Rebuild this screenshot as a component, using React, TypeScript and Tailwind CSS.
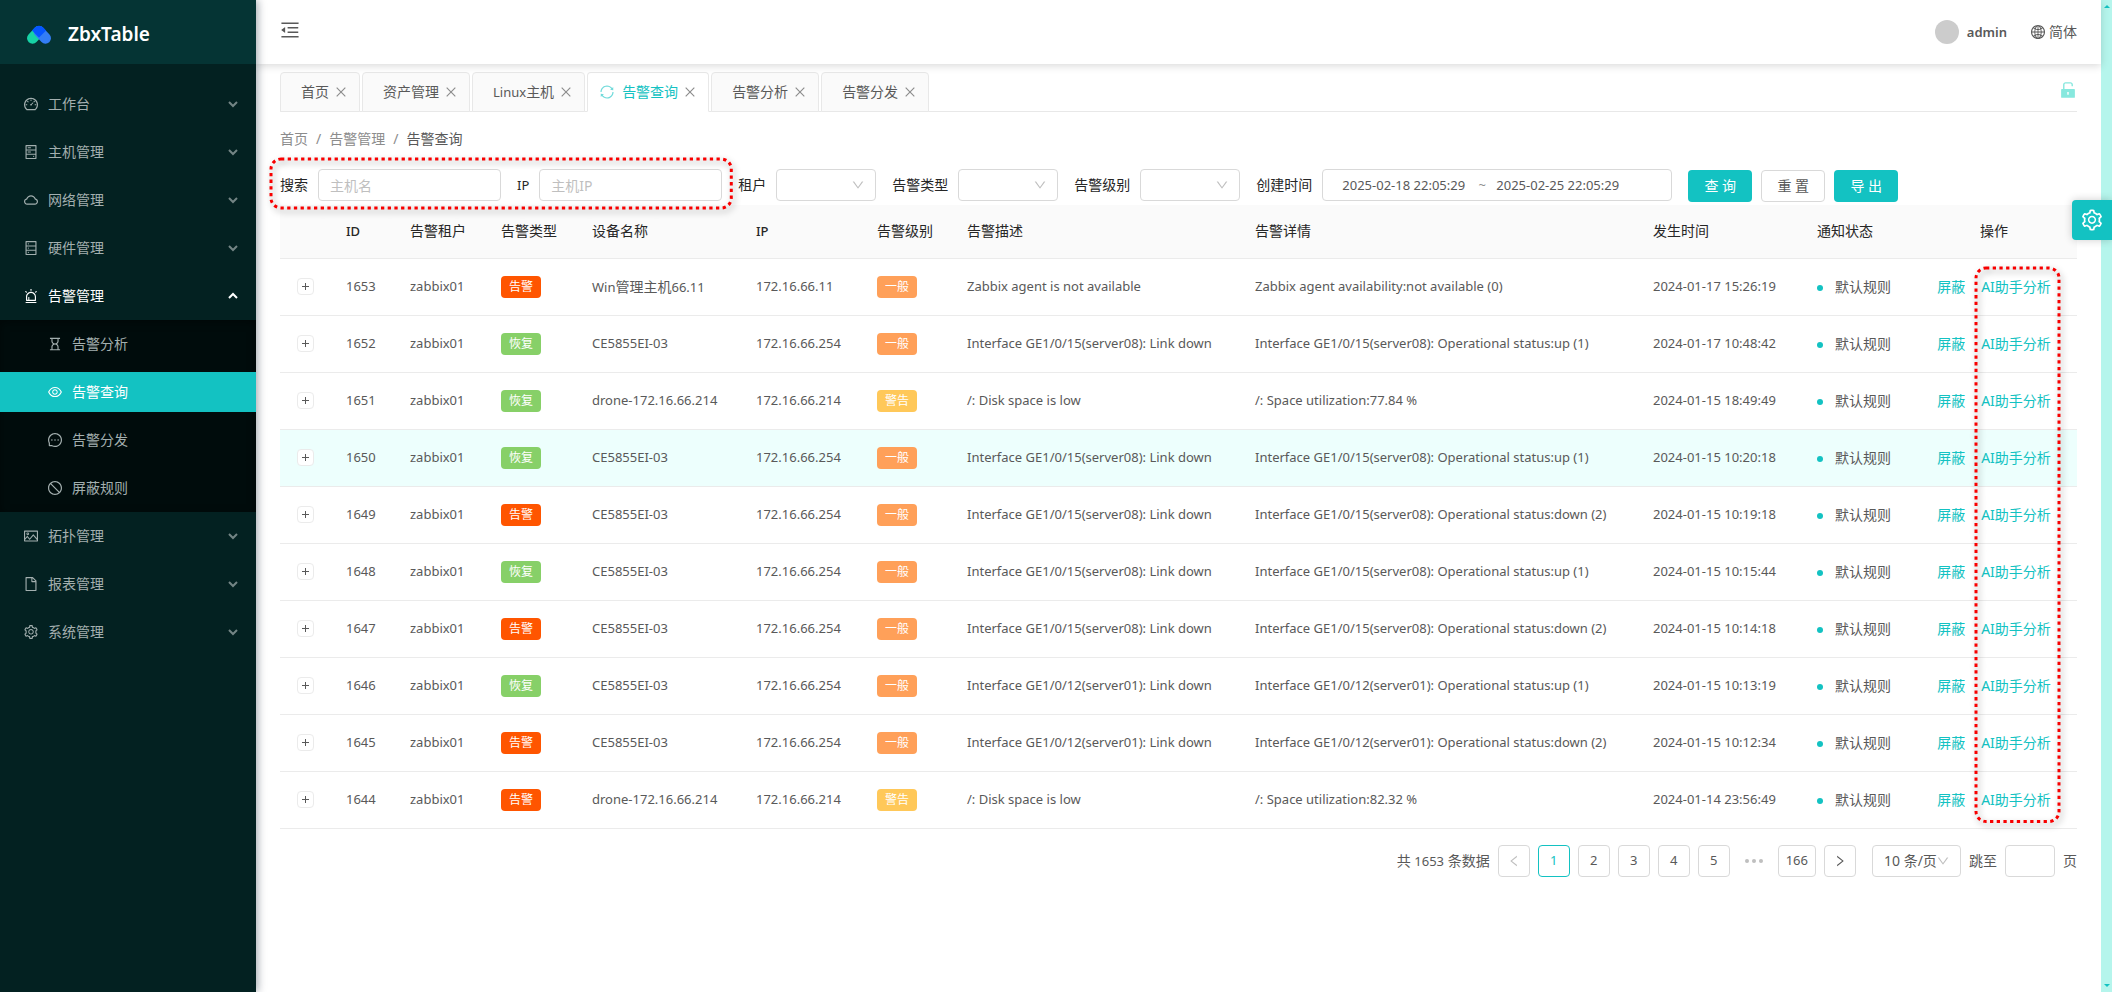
import type { ReactNode } from 'react';
import {
  AiFillUnlock,
  AiOutlineAlert,
  AiOutlineClose,
  AiOutlineCloud,
  AiOutlineDashboard,
  AiOutlineDatabase,
  AiOutlineDown,
  AiOutlineEye,
  AiOutlineFile,
  AiOutlineGlobal,
  AiOutlineHdd,
  AiOutlineHourglass,
  AiOutlineLeft,
  AiOutlineMenuFold,
  AiOutlineMessage,
  AiOutlinePicture,
  AiOutlineRight,
  AiOutlineSetting,
  AiOutlineStop,
  AiOutlineSync,
} from 'react-icons/ai';

interface MenuItem {
  label: string;
  icon: ReactNode;
  open?: boolean;
  children?: { label: string; icon: ReactNode; active?: boolean }[];
}

interface AlarmRow {
  id: number;
  type: '告警' | '恢复';
  device: ReactNode;
  ip: string;
  level: '一般' | '警告';
  desc: string;
  detail: string;
  time: string;
}

const menu: MenuItem[] = [
  { label: '工作台', icon: <AiOutlineDashboard /> },
  { label: '主机管理', icon: <AiOutlineHdd /> },
  { label: '网络管理', icon: <AiOutlineCloud /> },
  { label: '硬件管理', icon: <AiOutlineDatabase /> },
  {
    label: '告警管理',
    icon: <AiOutlineAlert />,
    open: true,
    children: [
      { label: '告警分析', icon: <AiOutlineHourglass /> },
      { label: '告警查询', icon: <AiOutlineEye />, active: true },
      { label: '告警分发', icon: <AiOutlineMessage /> },
      { label: '屏蔽规则', icon: <AiOutlineStop /> },
    ],
  },
  { label: '拓扑管理', icon: <AiOutlinePicture /> },
  { label: '报表管理', icon: <AiOutlineFile /> },
  { label: '系统管理', icon: <AiOutlineSetting /> },
];

const tabs: { key: string; title: ReactNode }[] = [
  { key: '首页', title: '首页' },
  { key: '资产管理', title: '资产管理' },
  { key: 'Linux主机', title: <><span className="text-[13px]">Linux</span>主机</> },
  { key: '告警查询', title: '告警查询' },
  { key: '告警分析', title: '告警分析' },
  { key: '告警分发', title: '告警分发' },
];
const activeTab = '告警查询';

const rows: AlarmRow[] = [
  { id: 1653, type: '告警', device: <>Win<span className="text-sm">管理主机</span>66.11</>, ip: '172.16.66.11', level: '一般', desc: 'Zabbix agent is not available', detail: 'Zabbix agent availability:not available (0)', time: '2024-01-17 15:26:19' },
  { id: 1652, type: '恢复', device: 'CE5855EI-03', ip: '172.16.66.254', level: '一般', desc: 'Interface GE1/0/15(server08): Link down', detail: 'Interface GE1/0/15(server08): Operational status:up (1)', time: '2024-01-17 10:48:42' },
  { id: 1651, type: '恢复', device: 'drone-172.16.66.214', ip: '172.16.66.214', level: '警告', desc: '/: Disk space is low', detail: '/: Space utilization:77.84 %', time: '2024-01-15 18:49:49' },
  { id: 1650, type: '恢复', device: 'CE5855EI-03', ip: '172.16.66.254', level: '一般', desc: 'Interface GE1/0/15(server08): Link down', detail: 'Interface GE1/0/15(server08): Operational status:up (1)', time: '2024-01-15 10:20:18' },
  { id: 1649, type: '告警', device: 'CE5855EI-03', ip: '172.16.66.254', level: '一般', desc: 'Interface GE1/0/15(server08): Link down', detail: 'Interface GE1/0/15(server08): Operational status:down (2)', time: '2024-01-15 10:19:18' },
  { id: 1648, type: '恢复', device: 'CE5855EI-03', ip: '172.16.66.254', level: '一般', desc: 'Interface GE1/0/15(server08): Link down', detail: 'Interface GE1/0/15(server08): Operational status:up (1)', time: '2024-01-15 10:15:44' },
  { id: 1647, type: '告警', device: 'CE5855EI-03', ip: '172.16.66.254', level: '一般', desc: 'Interface GE1/0/15(server08): Link down', detail: 'Interface GE1/0/15(server08): Operational status:down (2)', time: '2024-01-15 10:14:18' },
  { id: 1646, type: '恢复', device: 'CE5855EI-03', ip: '172.16.66.254', level: '一般', desc: 'Interface GE1/0/12(server01): Link down', detail: 'Interface GE1/0/12(server01): Operational status:up (1)', time: '2024-01-15 10:13:19' },
  { id: 1645, type: '告警', device: 'CE5855EI-03', ip: '172.16.66.254', level: '一般', desc: 'Interface GE1/0/12(server01): Link down', detail: 'Interface GE1/0/12(server01): Operational status:down (2)', time: '2024-01-15 10:12:34' },
  { id: 1644, type: '告警', device: 'drone-172.16.66.214', ip: '172.16.66.214', level: '警告', desc: '/: Disk space is low', detail: '/: Space utilization:82.32 %', time: '2024-01-14 23:56:49' },
];

const hoveredId = 1650;

const tagColors = {
  告警: 'bg-[#ff5500]',
  恢复: 'bg-[#87d068]',
  一般: 'bg-[#ffa059]',
  警告: 'bg-[#ffc859]',
};

function Logo() {
  return (
    <svg viewBox="0 0 26 20" className="h-5 w-[26px]" fill="none" aria-hidden="true">
      <g strokeWidth="11" strokeLinecap="round">
        <path d="M6.5 13.2 L12.8 6.5" stroke="#17d3a6" />
        <path d="M13.2 6.5 L19.5 13.2" stroke="#337df5" />
      </g>
      <path d="M13 0.8 C15 0.8 16.4 1.6 17.5 2.8 L20 5.5 L13 12.6 L6 5.5 L8.5 2.8 C9.6 1.6 11 0.8 13 0.8Z" fill="#0556ff" />
    </svg>
  );
}

// Dotted callout drawn over the block it marks
function Callout({ className }: { className: string }) {
  return (
    <div className={`pointer-events-none absolute z-10 ${className}`}>
      <svg className="h-full w-full overflow-visible drop-shadow-[2px_3px_3px_rgba(0,0,0,0.4)]" aria-hidden="true">
        <rect
          x="2"
          y="2"
          rx="10"
          className="h-[calc(100%-4px)] w-[calc(100%-4px)]"
          fill="none"
          stroke="#f80000"
          strokeWidth="3"
          strokeDasharray="3.3 3.4"
        />
      </svg>
    </div>
  );
}

function Tag({ text }: { text: keyof typeof tagColors }) {
  return (
    <span className={`inline-block h-[22px] rounded px-2 align-top text-xs leading-[21px] text-white ${tagColors[text]}`}>
      {text}
    </span>
  );
}

function Sidebar() {
  return (
    <aside className="z-30 w-64 shrink-0 bg-[#032121] text-[#a3afaf] shadow-[2px_0_8px_rgba(0,21,41,0.35)]">
      <div className="flex h-16 items-center gap-4 bg-[#053434] pl-[26px] pt-[6px]">
        <Logo />
        <h1 className="text-[19px] font-semibold text-white">ZbxTable</h1>
      </div>
      <nav className="pt-4">
        <ul>
          {menu.map((item) => (
            <li key={item.label}>
              <button
                className={`flex h-12 w-full items-center pl-[23px] pr-[18px] ${item.open ? 'text-white' : ''}`}
                aria-expanded={!!item.open}
              >
                <span className="mr-[9px] text-base">{item.icon}</span>
                <span>{item.label}</span>
                <svg
                  viewBox="0 0 10 8"
                  className={`ml-auto h-2 w-[10px] ${item.open ? 'rotate-180' : 'opacity-70'}`}
                  aria-hidden="true"
                >
                  <path d="M1 2 L5 6 L9 2" fill="none" stroke="currentColor" strokeWidth="2" />
                </svg>
              </button>
              {item.children && (
                <ul className="bg-[#000c0c] shadow-[inset_0_2px_8px_rgba(0,0,0,0.45)]">
                  {item.children.map((child) => (
                    <li key={child.label} className="py-1">
                      <a
                        href="#"
                        className={`flex h-10 items-center pl-[47px] ${child.active ? 'bg-[#13c2c2] text-white' : ''}`}
                      >
                        <span className="mr-[9px] text-base">{child.icon}</span>
                        {child.label}
                      </a>
                    </li>
                  ))}
                </ul>
              )}
            </li>
          ))}
        </ul>
      </nav>
    </aside>
  );
}

function Header() {
  return (
    <header className="relative z-20 flex h-16 items-center justify-between bg-white px-6 shadow-[0_2px_8px_rgba(0,0,0,0.15)]">
      <button aria-label="折叠菜单" className="-ml-px -mt-1 text-[22px]">
        <AiOutlineMenuFold />
      </button>
      <div className="flex items-center">
        <span className="mr-2 h-6 w-6 rounded-full bg-[#cccccc]" />
        <span className="text-[13px] font-semibold">admin</span>
        <button className="ml-[23px] flex items-center gap-[3px]">
          <AiOutlineGlobal className="text-base" />
          简体
        </button>
      </div>
    </header>
  );
}

function TabBar() {
  return (
    <div className="mt-2 flex h-10 items-end gap-0.5 border-b border-[#e8e8e8]">
      {tabs.map(({ key, title }) => (
        <div
          key={key}
          className={`-mb-px flex h-10 items-center rounded-t border border-[#e8e8e8] pr-[11px] ${
            key === activeTab ? 'border-b-white bg-white pl-[11px] text-[#13c2c2]' : 'bg-[#fafafa] pl-5'
          }`}
        >
          {key === activeTab && <AiOutlineSync className="mr-[7px] text-base opacity-60" />}
          <button>{title}</button>
          <button aria-label={`关闭${key}`} className="ml-[5px] text-sm text-[#8c8c8c]">
            <AiOutlineClose />
          </button>
        </div>
      ))}
      <button aria-label="解锁标签" className="-mr-px mb-[11px] ml-auto text-xl text-[#87e8de]">
        <AiFillUnlock />
      </button>
    </div>
  );
}

function FilterSelect({ id, label }: { id: string; label: string }) {
  return (
    <div className="mr-4 flex items-center gap-[10px]">
      <label htmlFor={id} className="text-[#262626]">{label}</label>
      <div className="relative">
        <select id={id} className="block h-8 w-[100px] appearance-none rounded border border-[#d9d9d9] bg-white" />
        <AiOutlineDown className="pointer-events-none absolute right-[11px] top-[9px] text-sm text-[#bfbfbf]" />
      </div>
    </div>
  );
}

function Filters() {
  const input = 'h-8 w-[183px] rounded border border-[#d9d9d9] px-[11px] placeholder:text-[#bfbfbf]';
  const button = 'mt-px h-8 w-16 rounded text-center';

  return (
    <form className="mb-[3px] mt-5 flex items-start" onSubmit={(e) => e.preventDefault()}>
      <div className="relative mr-4 flex items-center">
        <label htmlFor="host" className="mr-[10px] text-[#262626]">搜索</label>
        <input id="host" placeholder="主机名" className={input} />
        <label htmlFor="ip" className="ml-4 mr-[10px] text-[13px] text-[#262626]">IP</label>
        <input id="ip" placeholder="主机IP" className={input} />
        <Callout className="-inset-x-[11px] -bottom-[9px] -top-3" />
      </div>
      <FilterSelect id="tenant" label="租户" />
      <FilterSelect id="type" label="告警类型" />
      <FilterSelect id="level" label="告警级别" />
      <div className="mr-4 flex items-center gap-[10px]">
        <label htmlFor="start" className="text-[#262626]">创建时间</label>
        <div className="flex h-8 w-[350px] items-center rounded border border-[#d9d9d9] pl-[19px] text-[13px]">
          <input id="start" defaultValue="2025-02-18 22:05:29" className="w-[132px]" />
          <span className="w-4 text-center text-[#8c8c8c]">~</span>
          <input aria-label="结束时间" defaultValue="2025-02-25 22:05:29" className="w-[138px] pl-[6px]" />
        </div>
      </div>
      <div className="flex gap-[9px]">
        <button className={`${button} bg-[#13c2c2] text-white`}>查 询</button>
        <button className={`${button} border border-[#d9d9d9] bg-white`}>重 置</button>
        <button className={`${button} bg-[#13c2c2] text-white`}>导 出</button>
      </div>
    </form>
  );
}

function AlarmTable() {
  return (
    <div className="relative">
      <table className="w-full table-fixed text-left">
        <colgroup>
          <col className="w-[50px]" />
          <col className="w-[64px]" />
          <col className="w-[91px]" />
          <col className="w-[91px]" />
          <col className="w-[164px]" />
          <col className="w-[121px]" />
          <col className="w-[90px]" />
          <col className="w-[288px]" />
          <col />
          <col className="w-[164px]" />
          <col className="w-[110px]" />
          <col className="w-[166px]" />
        </colgroup>
        <thead className="bg-[#fafafa] text-[#262626]">
          <tr className="h-[53px] border-b border-[#ebebeb]">
            <th />
            {['ID', '告警租户', '告警类型', '设备名称', 'IP', '告警级别', '告警描述', '告警详情', '发生时间', '通知状态'].map((title) => (
              <th key={title} className={`px-4 ${title === 'ID' || title === 'IP' ? 'text-[13px] font-medium' : 'font-normal'}`}>
                {title}
              </th>
            ))}
            <th className="px-4 text-center font-normal">操作</th>
          </tr>
        </thead>
        <tbody className="text-[13px]">
          {rows.map((row) => (
            <tr key={row.id} className={`h-[57px] border-b border-[#ebebeb] ${row.id === hoveredId ? 'bg-[#edfffd]' : ''}`}>
              <td>
                <button
                  aria-label="展开"
                  className="mx-auto flex h-[17px] w-[17px] items-center justify-center rounded-sm border border-[#ebebeb] bg-white"
                >
                  <svg viewBox="0 0 7 7" className="h-[7px] w-[7px]" aria-hidden="true">
                    <path d="M0 3.5 H7 M3.5 0 V7" stroke="currentColor" />
                  </svg>
                </button>
              </td>
              <td className="px-4">{row.id}</td>
              <td className="px-4">zabbix01</td>
              <td className="px-4"><Tag text={row.type} /></td>
              <td className="whitespace-nowrap px-4">{row.device}</td>
              <td className="px-4">{row.ip}</td>
              <td className="px-4"><Tag text={row.level} /></td>
              <td className="whitespace-nowrap px-4">{row.desc}</td>
              <td className="whitespace-nowrap px-4">{row.detail}</td>
              <td className="whitespace-nowrap px-4">{row.time}</td>
              <td className="whitespace-nowrap px-4 text-sm">
                <span className="mr-3 inline-block h-[6px] w-[6px] rounded-full bg-[#13c2c2] align-middle" />
                默认规则
              </td>
              <td className="whitespace-nowrap text-center text-sm text-[#13c2c2]">
                <a href="#" className="mr-4">屏蔽</a>
                <a href="#">AI助手分析</a>
              </td>
            </tr>
          ))}
        </tbody>
      </table>
      <Callout className="bottom-[5px] right-4 top-[61px] w-[87px]" />
    </div>
  );
}

function Pagination() {
  const page = 'flex h-8 min-w-8 items-center justify-center rounded border px-[7px]';

  return (
    <div className="mt-4 flex items-center justify-end gap-2">
      <span>共 <span className="text-[13px]">1653</span> 条数据</span>
      <button aria-label="上一页" className={`${page} border-[#d9d9d9] text-sm text-[#bfbfbf]`} disabled>
        <AiOutlineLeft />
      </button>
      {[1, 2, 3, 4, 5].map((n) => (
        <button key={n} className={`${page} text-[13px] ${n === 1 ? 'border-[#13c2c2] text-[#13c2c2]' : 'border-[#d9d9d9]'}`}>
          {n}
        </button>
      ))}
      <button aria-label="向后 5 页" className="flex h-8 w-8 items-center justify-center text-[#bfbfbf]">
        <svg viewBox="0 0 18 4" className="h-1 w-[18px]" fill="currentColor" aria-hidden="true">
          <circle cx="2" cy="2" r="2" />
          <circle cx="9" cy="2" r="2" />
          <circle cx="16" cy="2" r="2" />
        </svg>
      </button>
      <button className={`${page} border-[#d9d9d9] text-[13px]`}>166</button>
      <button aria-label="下一页" className={`${page} border-[#d9d9d9] text-sm`}>
        <AiOutlineRight />
      </button>
      <div className="relative ml-2">
        <select aria-label="每页条数" className="block h-8 w-[89px] appearance-none rounded border border-[#d9d9d9] bg-white pl-[11px]">
          <option>10 条/页</option>
        </select>
        <AiOutlineDown className="pointer-events-none absolute right-[11px] top-[9px] text-sm text-[#bfbfbf]" />
      </div>
      <label htmlFor="jump">跳至</label>
      <input id="jump" className="h-8 w-[50px] rounded border border-[#d9d9d9] px-2" />
      <span>页</span>
    </div>
  );
}

export default function App() {
  return (
    <div className="flex min-h-screen bg-white font-['Noto_Sans','Noto_Sans_CJK_SC',sans-serif] text-sm text-[#595959]">
      <Sidebar />
      <div className="min-w-0 flex-1">
        <Header />
        <main className="px-6">
          <TabBar />
          <nav aria-label="面包屑" className="mt-[17px] flex gap-2 text-[#8c8c8c]">
            <a href="#">首页</a>
            <span>/</span>
            <a href="#">告警管理</a>
            <span>/</span>
            <span className="text-[#595959]">告警查询</span>
          </nav>
          <Filters />
          <AlarmTable />
          <Pagination />
        </main>
      </div>

      {/* Scroll track */}
      <div className="flex w-[11px] shrink-0 flex-col items-center justify-between bg-[#b5f5ec] py-[5px]">
        <svg viewBox="0 0 6 3" className="h-[3px] w-[6px]" aria-hidden="true"><path d="M0 3 L3 0 L6 3Z" fill="#13c2c2" /></svg>
        <svg viewBox="0 0 6 3" className="h-[3px] w-[6px]" aria-hidden="true"><path d="M0 0 L3 3 L6 0Z" fill="#13c2c2" /></svg>
      </div>

      <button
        aria-label="设置"
        className="fixed right-0 top-[200px] z-40 flex h-10 w-10 items-center justify-center rounded-l bg-[#13c2c2] text-2xl text-white shadow-[0_0_8px_rgba(0,0,0,0.2)]"
      >
        <AiOutlineSetting />
      </button>
    </div>
  );
}
